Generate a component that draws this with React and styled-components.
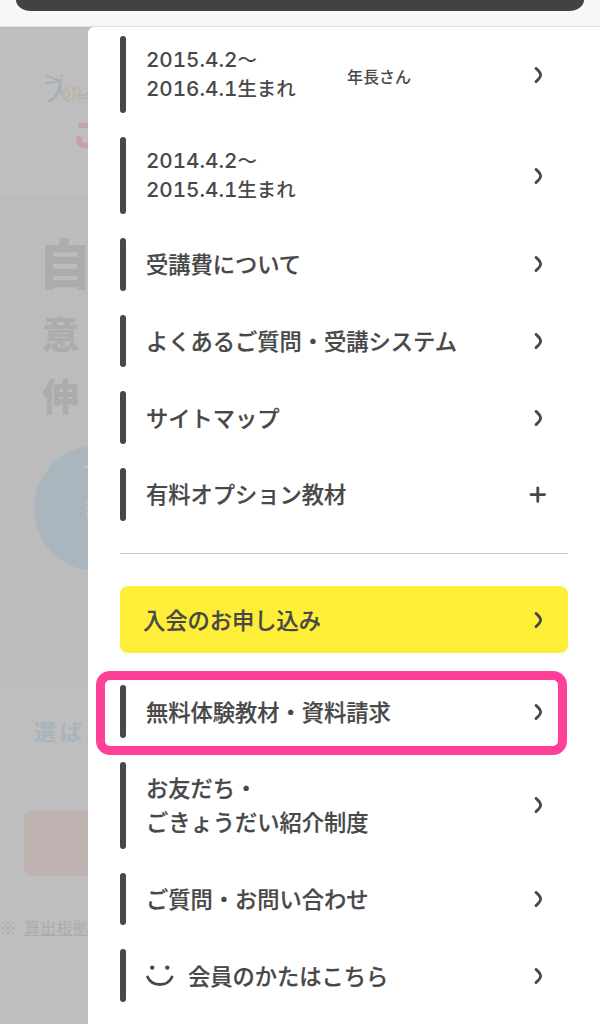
import React from 'react'
import styled, { createGlobalStyle } from 'styled-components'

const yearLinks = [
  { id: 1, text: ['2015.4.2', '2016.4.1'], grade: '年長さん' },
  { id: 2, text: ['2014.4.2', '2015.4.1'], grade: '' },
]

const mainLinks = [
  { id: 1, text: '受講費について' },
  { id: 2, text: 'よくあるご質問・受講システム' },
  { id: 3, text: 'サイトマップ' },
  { id: 4, text: '有料オプション教材', expand: true },
]

const Arrow = () => (
  <ArrowIcon viewBox='0 0 20 20'>
    <path d='M8 3.4 C9.4 4.6 12.6 7.6 12.6 10 C12.6 12.4 9.4 15.4 8 16.6' />
  </ArrowIcon>
)

const Plus = () => (
  <ArrowIcon viewBox='0 0 20 20'>
    <path d='M3 10.6 H16.6 M9.8 3.8 V17.4' />
  </ArrowIcon>
)

const Smile = () => (
  <SmileIcon viewBox='0 0 28 24'>
    <circle cx='6.2' cy='3.6' r='2.2' />
    <circle cx='21.3' cy='3.6' r='2.2' />
    <path d='M1.6 13 C6 23 21.5 23 26 13' />
  </SmileIcon>
)

const SiteLogo = () => (
  <Logo viewBox='0 0 60 38'>
    <g stroke='#a3b1ba' strokeWidth='2.2'>
      <path d='M4 2 C9 6 14 7 19 7 M3 10 C8 10 14 9 18 7' />
      <path d='M17 8 C18 17 13 25 6 28' strokeWidth='3' />
      <path d='M16 14 C18 20 21 25 25 28' />
    </g>
    <circle cx='19' cy='3' r='1.5' fill='#a9b5bb' />
    <g stroke='#bdb5a6' strokeWidth='2'>
      <path d='M21 24 C19 12 29 8 31 18 C34 10 40 18 35 25 M23 15 C27 18 28 23 22 27 M29 27 C30 21 35 21 36 27' />
    </g>
    <path d='M36 20 C40 26 41 20 48 20 M38 25 C42 27 44 24 48 25' stroke='#baa9aa' strokeWidth='1.3' />
  </Logo>
)

const Backdrop = () => (
  <BackdropContainer>
    <SiteLogo />
    <Brand>こ</Brand>
    <Hero>
      <HeroText $size={54} $height={81}>自</HeroText>
      <HeroText $size={37} $height={62}>意</HeroText>
      <HeroText $size={37} $height={62}>伸</HeroText>
    </Hero>
    <Bubble>
      <span>す</span>
      <span>き</span>
    </Bubble>
    <Reason>選ばれ</Reason>
    <PaleButton />
    <Note>
      ※ <u>算出根拠</u>
    </Note>
  </BackdropContainer>
)

const App = () => {
  return (
    <Screen>
      <GlobalStyle />
      <BrowserBar>
        <AddressBar />
      </BrowserBar>
      <Viewport>
        <Backdrop />
        <Drawer>
          {yearLinks.map(({ id, text, grade }) => (
            <MenuItem key={id} $height={76.8}>
              <Years>
                <span>
                  <b>{text[0]}</b>〜
                </span>
                <span>
                  <b>{text[1]}</b>生まれ
                </span>
              </Years>
              <Grade>{grade}</Grade>
              <Arrow />
            </MenuItem>
          ))}
          {mainLinks.map(({ id, text, expand }) => (
            <MenuItem key={id}>
              <Label>{text}</Label>
              {expand ? <Plus /> : <Arrow />}
            </MenuItem>
          ))}
          <Divider />
          <JoinButton>
            <Label>入会のお申し込み</Label>
            <Arrow />
          </JoinButton>
          <MenuItem>
            <Label>無料体験教材・資料請求</Label>
            <Arrow />
            <Highlight />
          </MenuItem>
          <MenuItem $height={86.6}>
            <Label>
              お友だち・
              <br />
              ごきょうだい紹介制度
            </Label>
            <Arrow />
          </MenuItem>
          <MenuItem>
            <Label>ご質問・お問い合わせ</Label>
            <Arrow />
          </MenuItem>
          <MenuItem>
            <Smile />
            <Label>会員のかたはこちら</Label>
            <Arrow />
          </MenuItem>
        </Drawer>
      </Viewport>
    </Screen>
  )
}

const GlobalStyle = createGlobalStyle`
  * {
    box-sizing: border-box;
  }
  body {
    margin: 0;
    overflow: hidden;
    color: #484848;
    font-family: 'Noto Sans CJK JP', sans-serif;
  }
`

const Screen = styled.div`
  display: flex;
  flex-direction: column;
  width: 600px;
  height: 1024px;
  overflow: hidden;
`

const BrowserBar = styled.div`
  flex: none;
  height: 27px;
  padding: 0 16px;
  background: #f7f7f7;
  border-bottom: 1px solid #dedede;
`

const AddressBar = styled.div`
  height: 10.5px;
  background: #424242;
  border-radius: 0 0 15px 15px / 0 0 11px 11px;
`

const Viewport = styled.div`
  position: relative;
  flex: 1;
  overflow: hidden;
  background: #bdbdbd;
`

const BackdropContainer = styled.div`
  display: flex;
  flex-direction: column;
  align-items: flex-start;
  width: 88px;
  height: 100%;
  overflow: hidden;
  background: linear-gradient(#bebebe 0 170px, #bcbcbc 170px 661px, #bebebe 661px);
  white-space: nowrap;
`

const Logo = styled.svg`
  flex: none;
  width: 60px;
  height: 38px;
  margin: 46px 0 0 43px;
  fill: none;
  stroke-linecap: round;
`

const Brand = styled.div`
  height: 40px;
  margin: 1px 0 0 72px;
  color: #c5a2a4;
  font-size: 32px;
  font-weight: 900;
  line-height: 40px;
`

const Hero = styled.div`
  display: flex;
  flex-direction: column;
  margin: 69px 0 0 42px;
`

const HeroText = styled.span`
  height: ${({ $height }) => $height}px;
  color: #aeabab;
  font-size: ${({ $size }) => $size}px;
  font-weight: 900;
  line-height: ${({ $height }) => $height}px;
  &:first-child {
    margin-left: -4px;
  }
`

const Bubble = styled.div`
  display: flex;
  flex: none;
  flex-direction: column;
  gap: 8px;
  width: 125px;
  height: 125px;
  margin: 20px 0 0 34px;
  padding: 12px 0 0 48px;
  border-radius: 50%;
  background: #aab6bd;
  color: #bdbfc0;
  font-size: 24px;
  font-weight: 700;
  line-height: 28px;
`

const Reason = styled.div`
  margin: 143px 0 0 34px;
  color: #a6b4bb;
  font-size: 22px;
  font-weight: 700;
  letter-spacing: 4px;
  line-height: 32px;
`

const PaleButton = styled.div`
  flex: none;
  width: 180px;
  height: 66px;
  margin: 64px 0 0 24px;
  border-radius: 8px;
  background: #bfb2b0;
`

const Note = styled.div`
  margin-top: 39px;
  color: #acacac;
  font-size: 16px;
  line-height: 24px;
  letter-spacing: 0.2px;
  word-spacing: 4px;
  u {
    display: inline-block;
    height: 21px;
    border-bottom: 1px solid #acacac;
    text-decoration: none;
  }
`

const Drawer = styled.nav`
  position: absolute;
  inset: 0 0 0 88px;
  display: flex;
  flex-direction: column;
  gap: 24px;
  padding: 9.4px 32px 0;
  border-radius: 6px 0 0 0;
  background: #fff;
`

const MenuItem = styled.div`
  position: relative;
  display: flex;
  flex: none;
  align-items: center;
  height: ${({ $height = 52.7 }) => $height}px;
  padding-right: 20px;
  &::before {
    content: '';
    align-self: stretch;
    flex: none;
    width: 6.4px;
    margin-right: 19.5px;
    border-radius: 4px;
    background: #484848;
  }
`

const Label = styled.span`
  padding-bottom: 2px;
  font-size: 22.27px;
  font-weight: 500;
  line-height: 34px;
  white-space: nowrap;
  -webkit-text-stroke: 0.2px #484848;
`

const Years = styled.div`
  display: flex;
  flex-direction: column;
  width: 201px;
  padding-bottom: 2px;
  font-size: 19.4px;
  font-weight: 500;
  line-height: 28.8px;
  white-space: nowrap;
  span {
    height: 28.8px;
  }
  b {
    font-family: Inter, sans-serif;
    font-size: 20.7px;
    font-weight: 500;
    font-feature-settings: 'tnum';
  }
`

const Grade = styled.span`
  padding-top: 3px;
  font-size: 16px;
  font-weight: 500;
`

const ArrowIcon = styled.svg`
  flex: none;
  width: 20px;
  height: 20px;
  margin-left: auto;
  fill: none;
  stroke: #484848;
  stroke-width: 2.8;
  stroke-linecap: round;
`

const SmileIcon = styled.svg`
  flex: none;
  width: 28px;
  height: 24px;
  margin-right: 14px;
  fill: #484848;
  path {
    fill: none;
    stroke: #484848;
    stroke-width: 2.8;
    stroke-linecap: round;
  }
`

const Divider = styled.div`
  flex: none;
  height: 1.5px;
  margin: 8px 0;
  background: #c9c9c9;
`

const JoinButton = styled.div`
  display: flex;
  flex: none;
  align-items: center;
  height: 67px;
  margin-bottom: 8px;
  padding: 0 20px 0 23px;
  border-radius: 8px;
  background: #ffee37;
`

// pink marker frame drawn around the free trial link
const Highlight = styled.div`
  position: absolute;
  top: -14px;
  right: 1px;
  bottom: -17px;
  left: -24px;
  border: 9.5px solid #ff4098;
  border-radius: 14px;
`

export default App
